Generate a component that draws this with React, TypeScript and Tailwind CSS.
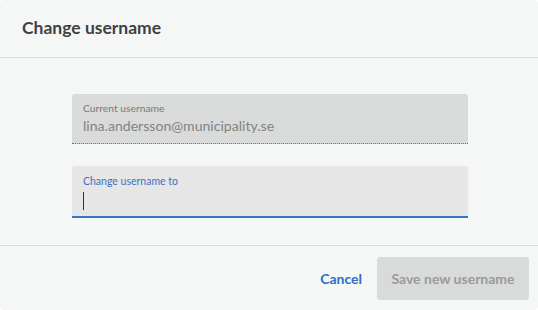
export default function App() {
  return (
    <div className="w-[538px] h-[310px] bg-[#f5f6f6] rounded-[4px] overflow-hidden flex flex-col font-['Lato','Noto_Sans',sans-serif]">
      <div className="h-[58px] border-b border-[#d9dada] flex items-center px-[22px]">
        <h1 className="text-[17.5px] font-bold text-[#3f4144]">Change username</h1>
      </div>
      <div className="flex-1 flex flex-col gap-[22px] pl-[72px] pr-[70px] pt-[36px]">
        <div className="h-[50px] bg-[#d9dada] rounded-t-[3px] border-b border-dotted border-[#6f6f6f] px-[11px] pt-[7px]">
          <div className="text-[10.3px] leading-[14px] text-[#7a7a7a]">Current username</div>
          <div className="text-[14.1px] leading-[22px] text-[#838383]">lina.andersson@municipality.se</div>
        </div>
        <div className="h-[52px] bg-[#e6e6e6] rounded-t-[3px] border-b-2 border-[#3b73c4] px-[11px] pt-[8px]">
          <div className="text-[10.5px] leading-[14px] text-[#3a72c2]">Change username to</div>
          <div className="mt-[4px] w-px h-[18px] bg-[#333]" />
        </div>
      </div>
      <div className="h-[65px] border-t border-[#d9dada] flex items-center justify-end gap-[15px] pr-[9px]">
        <button className="text-[14px] font-bold text-[#2f6ec0]">Cancel</button>
        <button className="w-[152px] h-[43px] rounded-[3px] bg-[#d9dada] text-[14px] font-bold text-[#9b9b9b]">
          Save new username
        </button>
      </div>
    </div>
  );
}
